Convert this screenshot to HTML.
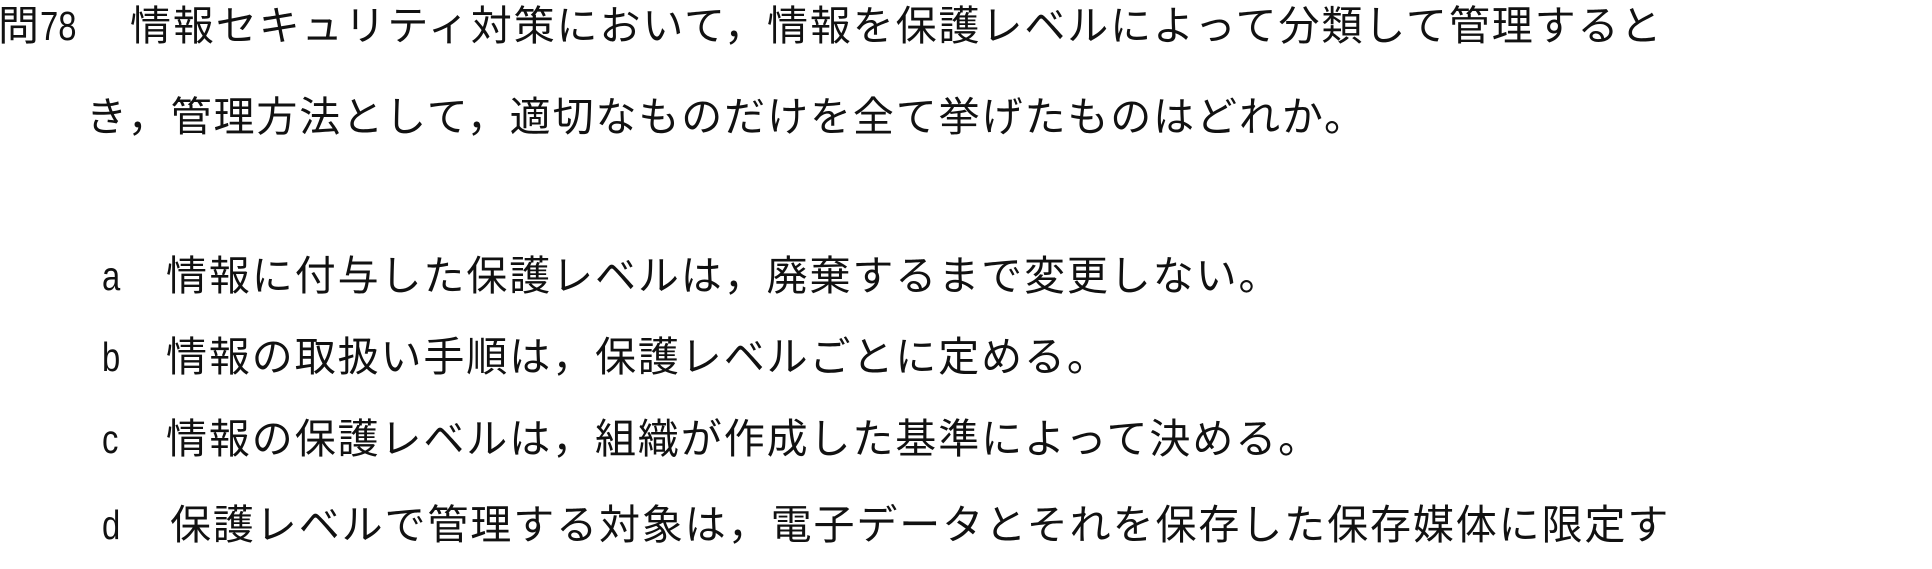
<!DOCTYPE html>
<html><head><meta charset="utf-8"><style>
html,body{margin:0;padding:0;background:#fff;width:1932px;height:569px;overflow:hidden}
.l{position:absolute;white-space:nowrap;font-family:"Liberation Sans","Noto Sans CJK JP",sans-serif;font-size:41px;line-height:40px;color:#111;letter-spacing:1.9px}
.n{transform:scaleX(0.8);transform-origin:left}
</style></head><body>
<div class="l" style="left:-2px;top:6px;letter-spacing:0">問</div>
<div class="l n" style="left:40px;top:6px;letter-spacing:0">78</div>
<div class="l" style="left:130px;top:6px">情報セキュリティ対策において，情報を保護レベルによって分類して管理すると</div>
<div class="l" style="left:86px;top:97px">き，管理方法として，適切なものだけを全て挙げたものはどれか。</div>
<div class="l n" style="left:102px;top:256px">a</div>
<div class="l" style="left:166px;top:256px">情報に付与した保護レベルは，廃棄するまで変更しない。</div>
<div class="l n" style="left:102px;top:337px">b</div>
<div class="l" style="left:166px;top:337px">情報の取扱い手順は，保護レベルごとに定める。</div>
<div class="l n" style="left:102px;top:419px">c</div>
<div class="l" style="left:166px;top:419px">情報の保護レベルは，組織が作成した基準によって決める。</div>
<div class="l n" style="left:102px;top:505px">d</div>
<div class="l" style="left:170px;top:505px">保護レベルで管理する対象は，電子データとそれを保存した保存媒体に限定す</div>
</body></html>
